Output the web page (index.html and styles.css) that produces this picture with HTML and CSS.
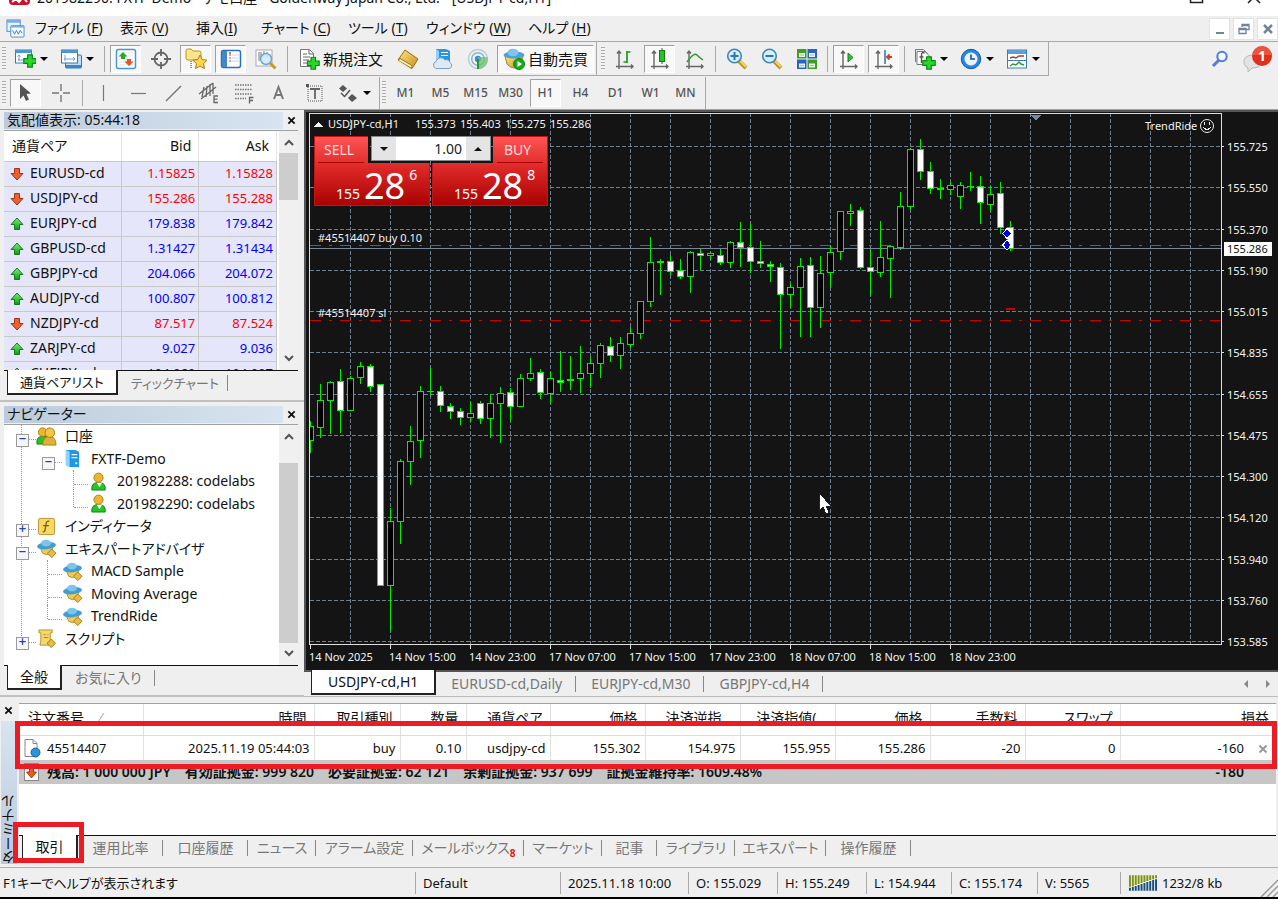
FILE: index.html
```html
<!DOCTYPE html>
<html lang="ja">
<head>
<meta charset="utf-8">
<title>USDJPY-cd,H1</title>
<link rel="stylesheet" href="styles.css">
</head>
<body>
<svg class="defs" aria-hidden="true">
  <defs>
    <linearGradient id="gBlue" x1="0" y1="0" x2="0" y2="1"><stop offset="0" stop-color="#8fd0f5"/><stop offset="1" stop-color="#1f78c8"/></linearGradient>
    <linearGradient id="gGold" x1="0" y1="0" x2="1" y2="1"><stop offset="0" stop-color="#ffe68a"/><stop offset="1" stop-color="#c8901c"/></linearGradient>
    <linearGradient id="gGreen" x1="0" y1="0" x2="0" y2="1"><stop offset="0" stop-color="#7cf07c"/><stop offset="1" stop-color="#0a9a12"/></linearGradient>
    <symbol id="plus" viewBox="0 0 12 12"><path d="M4 .7h4V4h3.3v4H8v3.3H4V8H.7V4H4z" fill="#2bd62b" stroke="#078a10"/></symbol>
    <symbol id="i-newchart" viewBox="0 0 22 22"><rect x="1.500" y="2" width="16" height="13" fill="#fff" stroke="#2f79b9"/><path d="M1.500 2h16v3h-16z" fill="#4c97d3"/><path d="M5 7v6M3.500 8.500 5 7l1.500 1.500M4 12h9" stroke="#6ba4d4" fill="none"/><use href="#plus" x="9" y="6" width="14" height="14"/></symbol>
    <symbol id="i-profiles" viewBox="0 0 22 22"><rect x="5.500" y="7" width="16" height="13" rx="1" fill="#c2ddf5" stroke="#2f79b9"/><path d="M6 17h15v3H6z" fill="#3d86c4"/><rect x="1.500" y="2" width="16" height="13" fill="#fff" stroke="#2f79b9"/><path d="M1.500 2h16v3h-16z" fill="#4c97d3"/><path d="M5 7v6M4 11h11M13 9l2 2-2 2" stroke="#6ba4d4" fill="none"/></symbol>
    <symbol id="i-watch" viewBox="0 0 22 22"><rect x="1.500" y="1.500" width="19" height="19" rx="2" fill="#fff" stroke="#4b96d1" stroke-width="1.500"/><path d="M4 5h14M4 8h14M4 11h14M4 14h14M4 17h14" stroke="#e2e2e2"/><path d="m8 4 4.500 4.500H10V11H6V8.500H3.500z" fill="#29a829"/><path d="m14 18 4.500-4.500H16V11h-4v2.500H9.500z" fill="#e6532a"/></symbol>
    <symbol id="i-cross" viewBox="0 0 22 22"><circle cx="11" cy="11" r="6.500" fill="none" stroke="#666" stroke-width="1.800"/><path d="M11 1v7M11 14v7M1 11h7M14 11h7" stroke="#666" stroke-width="1.800"/></symbol>
    <symbol id="i-nav" viewBox="0 0 22 22"><path d="M1 3q0-2 2-2h3l2 2h6q2 0 2 2v7H3q-2 0-2-2z" fill="#ffe58a" stroke="#bb9228"/><path d="M6 13v8" stroke="#333" stroke-dasharray="1 1"/><path d="m15 7 2.200 4.600 5 .6-3.700 3.400 1 5L15 18l-4.500 2.600 1-5-3.700-3.400 5-.6z" fill="#ffd84a" stroke="#a87d19"/></symbol>
    <symbol id="i-term" viewBox="0 0 22 22"><rect x="1.500" y="2.500" width="19" height="17" rx="2" fill="#fff" stroke="#2b6fb4" stroke-width="1.500"/><path d="M2 3h5v16H2z" fill="#4087cc"/><path d="M9 7h2M9 10h2M9 13h2" stroke="#e23b2e"/><path d="M9 5h2" stroke="#222"/><path d="M12 7h7M12 10h7M12 13h7" stroke="#c5d6e6"/></symbol>
    <symbol id="i-tester" viewBox="0 0 22 22"><rect x="1" y="2" width="16" height="16" fill="#fff" stroke="#aaa"/><path d="M4 4v9M6 4v6M9 3v6M12 4v5" stroke="#777"/><circle cx="11" cy="11" r="5.500" fill="#cfe8fa" fill-opacity=".85" stroke="#6ba7d6" stroke-width="1.500"/><path d="m15 15 5.500 5.500" stroke="#c99922" stroke-width="3"/></symbol>
    <symbol id="i-order" viewBox="0 0 22 22"><path d="M2.500 1.500h9l4 4v13h-13z" fill="#fff" stroke="#777"/><path d="M11 1.500V6h4.500M5 6h4M5 9h7M5 12h6M5 15h4" stroke="#666" fill="none"/><use href="#plus" x="8.500" y="8.500" width="13.500" height="13.500"/></symbol>
    <symbol id="i-book" viewBox="0 0 22 22"><path d="M1 12 8 2l13 9-6 9.500z" fill="url(#gGold)" stroke="#a06b10"/><path d="m1 12 13.500 9 1-3.500L2.500 9.500z" fill="#a8740f"/><path d="m2 12.500 12 7 .8-1.500L3 11z" fill="#fff3c4"/></symbol>
    <symbol id="i-cloud" viewBox="0 0 22 22"><path d="M4 1h10l4 2v11H4z" fill="#2b95e0"/><path d="m4 1 3 2v10H4z" fill="#8ed0fa"/><path d="M9 4.500h7M9 7.500h7" stroke="#fff"/><path d="M4 20.500a3.700 3.700 0 0 1 0-7 5 5 0 0 1 9-1.500 4 4 0 0 1 5 2.500 3.200 3.200 0 0 1-1 6z" fill="#dfe9f4" stroke="#7c9fc4"/></symbol>
    <symbol id="i-signal" viewBox="0 0 22 22"><circle cx="11" cy="11" r="9.500" fill="#eef4f8" stroke="#b8cbd9" stroke-width="1.500"/><circle cx="11" cy="11" r="6.300" fill="none" stroke="#8bb3cc" stroke-width="1.500"/><circle cx="11" cy="11" r="3.200" fill="#3b8fd0"/><path d="M11 9v12a10 10 0 0 0 9.500-12" fill="#6cc06c" fill-opacity=".75"/><path d="M11 11v10" stroke="#239a2b" stroke-width="2"/></symbol>
    <symbol id="i-auto" viewBox="0 0 22 22"><path d="M2 8h18l-2 8q-7 8-14 0z" fill="url(#gGold)" stroke="#ad8220"/><ellipse cx="11" cy="7" rx="10.500" ry="3.500" fill="#4aa3d8"/><ellipse cx="10" cy="4.500" rx="5.500" ry="3.800" fill="#7fc4ec"/><circle cx="16" cy="16" r="5.500" fill="#14ae1b" stroke="#0b7d12"/><path d="M14.500 13v6l4.500-3z" fill="#fff"/></symbol>
    <symbol id="axes" viewBox="0 0 22 22"><path d="M5 3v18M2 18.500h17M3 5.500 5 3l2 2.500M17 16.500l2 2-2 2" stroke="#666" stroke-width="1.400" fill="none"/></symbol>
    <symbol id="i-bar" viewBox="0 0 22 22"><use href="#axes" width="22" height="22"/><path d="M13 3v12M13 4h3.500M13 14H9.500" stroke="#1c9a1c" stroke-width="1.700" fill="none"/></symbol>
    <symbol id="i-candle" viewBox="0 0 22 22"><use href="#axes" width="22" height="22"/><path d="M13 0v16" stroke="#137d13"/><rect x="10.500" y="2.500" width="5" height="11" fill="#25c325" stroke="#137d13"/></symbol>
    <symbol id="i-line" viewBox="0 0 22 22"><use href="#axes" width="22" height="22"/><path d="M3 14q7-10 10-7t6 5" stroke="#2d9a2d" stroke-width="1.500" fill="none"/></symbol>
    <symbol id="lens" viewBox="0 0 22 22"><path d="m13 13 7 7" stroke="#c1921d" stroke-width="4"/><path d="m14 13 6 6" stroke="#f5d45e" stroke-width="2"/><circle cx="8.500" cy="8" r="6.800" fill="#d7effb" stroke="#3e86bf" stroke-width="1.600"/></symbol>
    <symbol id="i-zin" viewBox="0 0 22 22"><use href="#lens" width="22" height="22"/><path d="M4.500 8h8M8.500 4v8" stroke="#2874b4" stroke-width="2"/></symbol>
    <symbol id="i-zout" viewBox="0 0 22 22"><use href="#lens" width="22" height="22"/><path d="M4.500 8h8" stroke="#2874b4" stroke-width="2"/></symbol>
    <symbol id="i-tiles" viewBox="0 0 22 22"><path d="M1 1h9.500v9.500H1zM11.500 11.500H21V21h-9.500z" fill="#3f9e22"/><path d="M11.500 1H21v9.500h-9.500zM1 11.500h9.500V21H1z" fill="#2861c8"/><path d="M3 5h6v4H3zM13 5h6v4h-6zM3 15.500h6v4H3zM13 15.500h6v4h-6z" fill="#e9f3ee"/><path d="M4 7h4M14 7h4M4 17.500h4M14 17.500h4" stroke="#9cc0a8"/></symbol>
    <symbol id="i-scroll" viewBox="0 0 22 22"><use href="#axes" width="22" height="22"/><path d="M10 5v9l5-4.500z" fill="#2fbf3c" stroke="#16811f"/></symbol>
    <symbol id="i-shift" viewBox="0 0 22 22"><use href="#axes" width="22" height="22"/><path d="M12 2v14" stroke="#2877ad" stroke-width="1.500"/><path d="M19 9h-5m2.500-2.500L14 9l2.500 2.500" stroke="#c8421c" stroke-width="1.800" fill="none"/></symbol>
    <symbol id="i-ind" viewBox="0 0 22 22"><path d="M3 3.500h8l4 4v9H3z" fill="#fff" stroke="#777"/><path d="M1.500 14V1.500h8l4 4" fill="none" stroke="#777"/><path d="M10.500 5q-3-1.500-3 2v8M5.500 9h4" stroke="#555" stroke-width="1.400" fill="none"/><use href="#plus" x="8" y="8" width="14" height="14"/></symbol>
    <symbol id="i-clock" viewBox="0 0 22 22"><circle cx="11" cy="11" r="9.700" fill="#2688e4" stroke="#1055a8"/><circle cx="11" cy="11" r="6.500" fill="#e9f3fb"/><path d="M11 6.500V11h4" stroke="#1b4f8c" stroke-width="1.600" fill="none"/></symbol>
    <symbol id="i-tpl" viewBox="0 0 22 22"><rect x="1.500" y="2" width="19" height="18" fill="#fff" stroke="#3b7dbb"/><path d="M2 2h18v4H2z" fill="#5b9ed8"/><path d="M2 12.500h18" stroke="#3b7dbb"/><path d="m4 10 3-1 3 1 3-2h5" stroke="#b2392a" stroke-width="1.500" fill="none"/><path d="m4 18 3-2 3 1 3-3 2 2 3 1" stroke="#2c9a3c" stroke-width="1.500" fill="none"/></symbol>
    <symbol id="i-cursor" viewBox="0 0 22 22"><path d="M5 2v15l3.500-3.500L11 19l3-1.500-2.500-5.500 4.500-.5z" fill="#555"/></symbol>
    <symbol id="i-cross2" viewBox="0 0 22 22"><path d="M11 2v7M11 13v7M2 11h7M13 11h7" stroke="#777" stroke-width="1.400"/></symbol>
    <symbol id="i-vl" viewBox="0 0 22 22"><path d="M10.500 3v16" stroke="#777" stroke-width="1.200"/></symbol>
    <symbol id="i-hl" viewBox="0 0 22 22"><path d="M3 11.500h15" stroke="#777" stroke-width="1.200"/></symbol>
    <symbol id="i-tl" viewBox="0 0 22 22"><path d="M3 19 18 4" stroke="#777" stroke-width="1.400"/></symbol>
    <symbol id="i-ch" viewBox="0 0 22 22"><path d="M1 12 15 1M3 17 18 5M6 5 4 15M9 4 8 15M12 2v12M15 1v11" stroke="#666" stroke-width="1.300"/><path d="M20 14h-4v6.500h4M16 17.200h3.500" stroke="#666" stroke-width="1.300" fill="none"/></symbol>
    <symbol id="i-fib" viewBox="0 0 22 22"><path d="M2 3h17M2 7.500h17M2 12h17M2 16.500h11" stroke="#777" stroke-width="1.300" stroke-dasharray="1.500 1"/><path d="M20.500 15.500h-4v6M16.500 18.500h3.500" stroke="#666" stroke-width="1.300" fill="none"/></symbol>
    <symbol id="i-tx" viewBox="0 0 22 22"><path d="M6 17 10.500 5 15 17M7.500 13h6" stroke="#777" stroke-width="2" fill="none"/></symbol>
    <symbol id="i-lbl" viewBox="0 0 22 22"><rect x="5" y="4" width="14" height="15" fill="none" stroke="#555" stroke-dasharray="1 1"/><path d="M7 7h10M12 7v10" stroke="#666" stroke-width="1.800"/><path d="M3 2h3v3H3z" fill="#555"/></symbol>
    <symbol id="i-arr" viewBox="0 0 22 22"><path d="m6 3 4 3.500-4 3.500-4-3.500zM15 12l5 4-5 4-4-4z" fill="#555"/><path d="m8 14 5-6M4 11l4 4" stroke="#555" stroke-width="1.500"/></symbol>
    <symbol id="i-up" viewBox="0 0 14 14"><path d="M7 1 13 7.500H9.500v5h-5v-5H1z" fill="url(#gGreen)" stroke="#187818"/></symbol>
    <symbol id="i-down" viewBox="0 0 14 14"><path d="M7 13 1 6.500h3.500v-5h5v5H13z" fill="#ee6030" stroke="#a0340f"/></symbol>
    <symbol id="i-user" viewBox="0 0 20 20"><path d="M3 19q-1-8 7-8t7 8z" fill="#26c32b" stroke="#0c8413"/><path d="m8 11 3 5 3-5z" fill="#fff"/><circle cx="10" cy="6" r="4.800" fill="#efb62c" stroke="#a87b12"/></symbol>
    <symbol id="i-users" viewBox="0 0 22 20"><path d="M1 18q-1-8 5-8h5v8z" fill="#26c32b" stroke="#0c8413"/><circle cx="7" cy="5.500" r="4.500" fill="#efb62c" stroke="#a87b12"/><path d="M7 19q0-9 7-9t7 9z" fill="#dfb03a" stroke="#a87b12"/><circle cx="14.500" cy="6" r="5" fill="#f3c64a" stroke="#a87b12"/></symbol>
    <symbol id="i-server" viewBox="0 0 20 20"><path d="M3 1h10l4 2v16H7l-4-2z" fill="#1f97e6"/><path d="m3 1 4 2v16l-4-2z" fill="#90d4fb"/><path d="M9 6h6M9 9h6" stroke="#fff" stroke-width="1.300"/><path d="M13 15h2" stroke="#fff" stroke-width="2"/></symbol>
    <symbol id="i-func" viewBox="0 0 20 20"><rect x="1.500" y="1.500" width="17" height="17" rx="2" fill="#f7d865" stroke="#b8912c"/><path d="M13 4.500q-3-1-3.500 3l-1 6q-.5 2.500-2.500 2M6.500 9h6" stroke="#7b5d10" stroke-width="1.400" fill="none"/></symbol>
    <symbol id="i-ea" viewBox="0 0 22 20"><path d="M4 8h14l-3 7q-4 3-8 0z" fill="#f0cb55" stroke="#b38b24"/><ellipse cx="11" cy="7" rx="10" ry="3.800" fill="#3f9ed4" transform="rotate(-6 11 7)"/><ellipse cx="10.500" cy="4.300" rx="5.200" ry="3.600" fill="#7cc4ea"/><path d="m16.500 10.500 4.500 4.500-4.500 4.500-4.500-4.500z" fill="#e9bb45" stroke="#a17b1c"/></symbol>
    <symbol id="i-script" viewBox="0 0 22 20"><path d="M3 1h14v3h-2v9l2 4H4l1-4V4H3z" fill="#f6d76c" stroke="#b8912c"/><path d="M8 6h2M12 6h1M8 9h5" stroke="#a57f1e"/><path d="m16 10.500 4.500 4.500-4.500 4.500-4.500-4.500z" fill="#e9bb45" stroke="#a17b1c"/></symbol>
    <symbol id="i-close" viewBox="0 0 10 10"><path d="m1.500 1.500 7 7m0-7-7 7" stroke="currentColor" stroke-width="2"/></symbol>
    <symbol id="i-chev" viewBox="0 0 12 12"><path d="m2 8 4-4 4 4" stroke="#555" stroke-width="2" fill="none"/></symbol>
  </defs>
</svg>

<header class="titlebar">
  <svg class="logo" viewBox="0 0 21 20"><rect width="21" height="20" rx="4" fill="#d0102a"/><path d="m3 17 4-3 3 3 4-5 4 5" stroke="#fff" stroke-width="2" fill="none"/></svg>
  <span class="title">201982290: FXTF-Demo - デモ口座 - Goldenway Japan Co., Ltd. - [USDJPY-cd,H1]</span>
  <svg class="wincontrols" viewBox="0 0 76 12"><path d="M4.500 0v6.500h12V0" fill="none" stroke="#222" stroke-width="1.500"/><path d="m62 7 6-6 6 6" fill="none" stroke="#222" stroke-width="1.500"/></svg>
</header>

<nav class="menubar">
  <svg class="appicon" viewBox="0 0 20 20"><rect x="1" y="1" width="14" height="12" fill="#e8f2fb" stroke="#4e8fce"/><path d="M1 1h14v3H1z" fill="#78b0e2"/><rect x="5" y="7" width="14" height="12" rx="1" fill="#f4f9fd" stroke="#4e8fce"/><path d="M5 7h14v2H5z" fill="#78b0e2"/><path d="m7 12 2 4 2-4 2 4 2-4 2 3" stroke="#3f7fc0" fill="none"/></svg>
  <div class="menus"><button>ファイル (<u>F</u>)</button><button>表示 (<u>V</u>)</button><button>挿入(<u>I</u>)</button><button>チャート (<u>C</u>)</button><button>ツール (<u>T</u>)</button><button>ウィンドウ (<u>W</u>)</button><button>ヘルプ (<u>H</u>)</button></div>
  <div class="mdi">
    <button aria-label="最小化"><svg viewBox="0 0 12 12"><path d="M2 10h8" stroke="#70859a" stroke-width="2"/></svg></button>
    <button aria-label="元に戻す"><svg viewBox="0 0 12 12"><path d="M4 4V1.500h7v5H8.500M1 5.500h7v5H1zM1 6.500h7M4 2.500h7" stroke="#70859a" stroke-width="1.300" fill="none"/></svg></button>
    <button aria-label="閉じる"><svg viewBox="0 0 12 12"><path d="m2 2 8 8m0-8-8 8" stroke="#70859a" stroke-width="2.500"/></svg></button>
  </div>
</nav>

<div class="toolrow">
  <div class="toolbar">
    <i class="grip"></i>
    <button class="tb drop" aria-label="新規チャート"><svg><use href="#i-newchart"/></svg></button>
    <button class="tb drop" aria-label="プロファイル"><svg><use href="#i-profiles"/></svg></button>
    <i class="sep"></i>
    <button class="tb on" aria-label="気配値"><svg><use href="#i-watch"/></svg></button>
    <button class="tb" aria-label="データ"><svg><use href="#i-cross"/></svg></button>
    <button class="tb on" aria-label="ナビ"><svg><use href="#i-nav"/></svg></button>
    <button class="tb on" aria-label="端末"><svg><use href="#i-term"/></svg></button>
    <button class="tb" aria-label="テスター"><svg><use href="#i-tester"/></svg></button>
    <i class="sep"></i>
    <button class="tb text order"><svg><use href="#i-order"/></svg>新規注文</button>
    <button class="tb" aria-label="エディタ"><svg><use href="#i-book"/></svg></button>
    <button class="tb" aria-label="クラウド"><svg><use href="#i-cloud"/></svg></button>
    <button class="tb" aria-label="シグナル"><svg><use href="#i-signal"/></svg></button>
    <button class="tb text on auto"><svg><use href="#i-auto"/></svg>自動売買</button>
  </div>
  <div class="toolbar charttools">
    <i class="grip"></i>
    <button class="tb" aria-label="バー"><svg><use href="#i-bar"/></svg></button>
    <button class="tb on" aria-label="ローソク足"><svg><use href="#i-candle"/></svg></button>
    <button class="tb" aria-label="ライン"><svg><use href="#i-line"/></svg></button>
    <i class="sep"></i>
    <button class="tb" aria-label="拡大"><svg><use href="#i-zin"/></svg></button>
    <button class="tb" aria-label="縮小"><svg><use href="#i-zout"/></svg></button>
    <button class="tb" aria-label="整列"><svg><use href="#i-tiles"/></svg></button>
    <i class="sep"></i>
    <button class="tb on" aria-label="自動スクロール"><svg><use href="#i-scroll"/></svg></button>
    <button class="tb on" aria-label="シフト"><svg><use href="#i-shift"/></svg></button>
    <i class="sep"></i>
    <button class="tb drop" aria-label="指標"><svg><use href="#i-ind"/></svg></button>
    <button class="tb drop" aria-label="時間足"><svg><use href="#i-clock"/></svg></button>
    <button class="tb drop" aria-label="定型"><svg><use href="#i-tpl"/></svg></button>
  </div>
  <div class="quick">
    <button aria-label="検索"><svg viewBox="0 0 18 18"><path d="m2 16 6-6" stroke="#4c7fd6" stroke-width="3"/><circle cx="11" cy="6.500" r="4.700" fill="#f4f8ff" stroke="#4c7fd6" stroke-width="2"/></svg></button>
    <button aria-label="通知" class="bell"><svg viewBox="0 0 30 28"><path d="M9 10q-9 1-8 8 1 4 4 5v4l4-4q9 0 10-6z" fill="#e3e3e6" stroke="#b9b9bd"/><circle cx="19" cy="11" r="10" fill="#e0301e"/><path d="M9.500 10a9.500 9 0 0 1 19 0z" fill="#f06a50" fill-opacity=".6"/></svg><b>1</b></button>
  </div>
</div>
<div class="toolrow second">
  <div class="toolbar">
    <i class="grip"></i>
    <button class="tb on" aria-label="カーソル"><svg><use href="#i-cursor"/></svg></button>
    <button class="tb" aria-label="十字"><svg><use href="#i-cross2"/></svg></button>
    <i class="sep"></i>
    <button class="tb" aria-label="垂直線"><svg><use href="#i-vl"/></svg></button>
    <button class="tb" aria-label="水平線"><svg><use href="#i-hl"/></svg></button>
    <button class="tb" aria-label="傾向線"><svg><use href="#i-tl"/></svg></button>
    <button class="tb" aria-label="チャネル"><svg><use href="#i-ch"/></svg></button>
    <button class="tb" aria-label="フィボナッチ"><svg><use href="#i-fib"/></svg></button>
    <button class="tb" aria-label="文字"><svg><use href="#i-tx"/></svg></button>
    <button class="tb" aria-label="ラベル"><svg><use href="#i-lbl"/></svg></button>
    <button class="tb drop" aria-label="矢印"><svg><use href="#i-arr"/></svg></button>
  </div>
  <div class="toolbar frames">
    <i class="grip"></i>
    <button class="tb">M1</button><button class="tb">M5</button><button class="tb">M15</button><button class="tb">M30</button><button class="tb on">H1</button><button class="tb">H4</button><button class="tb">D1</button><button class="tb">W1</button><button class="tb">MN</button>
  </div>
</div>

<main class="workspace">
  <div class="side">
    <section class="panel">
      <h2><span>気配値表示: 05:44:18</span><button aria-label="閉じる"><svg><use href="#i-close"/></svg></button></h2>
      <div class="body market">
        <table>
          <thead><tr><th>通貨ペア</th><th>Bid</th><th>Ask</th></tr></thead>
          <tbody>
            <tr class="down"><td><svg><use href="#i-down"/></svg>EURUSD-cd</td><td>1.15825</td><td>1.15828</td></tr>
            <tr class="down"><td><svg><use href="#i-down"/></svg>USDJPY-cd</td><td>155.286</td><td>155.288</td></tr>
            <tr><td><svg><use href="#i-up"/></svg>EURJPY-cd</td><td>179.838</td><td>179.842</td></tr>
            <tr><td><svg><use href="#i-up"/></svg>GBPUSD-cd</td><td>1.31427</td><td>1.31434</td></tr>
            <tr><td><svg><use href="#i-up"/></svg>GBPJPY-cd</td><td>204.066</td><td>204.072</td></tr>
            <tr><td><svg><use href="#i-up"/></svg>AUDJPY-cd</td><td>100.807</td><td>100.812</td></tr>
            <tr class="down"><td><svg><use href="#i-down"/></svg>NZDJPY-cd</td><td>87.517</td><td>87.524</td></tr>
            <tr><td><svg><use href="#i-up"/></svg>ZARJPY-cd</td><td>9.027</td><td>9.036</td></tr>
            <tr><td><svg><use href="#i-up"/></svg>CHFJPY-cd</td><td>194.969</td><td>194.997</td></tr>
          </tbody>
        </table>
        <div class="scroll"><svg><use href="#i-chev"/></svg><i class="thumb short"></i><svg class="flip"><use href="#i-chev"/></svg></div>
      </div>
      <div class="tabs markettabs"><button class="active">通貨ペアリスト</button><button>ティックチャート</button></div>
    </section>
    <section class="panel nav">
      <h2><span>ナビゲーター</span><button aria-label="閉じる"><svg><use href="#i-close"/></svg></button></h2>
      <div class="body">
        <ul class="tree">
          <li class="l1 minus"><svg><use href="#i-users"/></svg>口座</li>
          <li class="l2 minus"><svg><use href="#i-server"/></svg>FXTF-Demo</li>
          <li class="l3"><svg><use href="#i-user"/></svg>201982288: codelabs</li>
          <li class="l3 last"><svg><use href="#i-user"/></svg>201982290: codelabs</li>
          <li class="l1 plus"><svg><use href="#i-func"/></svg>インディケータ</li>
          <li class="l1 minus"><svg><use href="#i-ea"/></svg>エキスパートアドバイザ</li>
          <li class="l2"><svg><use href="#i-ea"/></svg>MACD Sample</li>
          <li class="l2"><svg><use href="#i-ea"/></svg>Moving Average</li>
          <li class="l2 last"><svg><use href="#i-ea"/></svg>TrendRide</li>
          <li class="l1 plus last"><svg><use href="#i-script"/></svg>スクリプト</li>
        </ul>
        <div class="scroll"><svg><use href="#i-chev"/></svg><i class="thumb long"></i><svg class="flip"><use href="#i-chev"/></svg></div>
      </div>
      <div class="tabs"><button class="active">全般</button><button>お気に入り</button></div>
    </section>
  </div>
  <div class="chartcol">
    <div class="chart">
      <svg id="chart" viewBox="304 110 974 560" preserveAspectRatio="xMinYMin meet">
        <g id="grid"></g>
        <path d="M310 245.500H1221" stroke="#228b22" stroke-dasharray="11 8 3 8" class="level"/>
        <path d="M310 320.500H1221" stroke="#c80000" stroke-dasharray="11 8 3 8" class="level"/>
        <path d="M310 248.500H1221" stroke="#778899"/>
        <g id="candles"></g>
        <path d="M1006 309h9" stroke="#c80000" stroke-width="2"/>
        <g fill="#0000f0" stroke="#fff"><path d="m1007 228.500 4.500 5-4.500 5-4.500-5zM1007 240l4.500 5-4.500 5-4.500-5z"/></g>
        <path d="M309.500 644.500V113.500H1221V644.500z" fill="none" stroke="#ddd" stroke-width="1"/>
        <path d="M1030 114.500h12l-6 6z" fill="#778899"/>
        <g id="labels" class="lbl">
          <path d="M314 127h9l-4.500-5z"/>
          <text x="328" y="128">USDJPY-cd,H1</text><text x="415" y="128">155.373</text><text x="460" y="128">155.403</text><text x="505" y="128">155.275</text><text x="550" y="128">155.286</text>
          <text x="318" y="242">#45514407 buy 0.10</text>
          <text x="318" y="317">#45514407 sl</text>
          <text x="1145" y="130">TrendRide</text>
        </g>
        <g fill="none" stroke="#eee"><circle cx="1207" cy="126" r="6.500"/><path d="M1203 127q4 5 8 0M1204.500 122v2.500M1209.500 122v2.500" stroke-width="1.300"/></g>
        <rect x="1224" y="242" width="48" height="14" fill="#fff"/><text x="1227" y="253" class="price">155.286</text>
        <path d="M819 493v18l4-4 3 7 3-1.500-3-6.500h5.500z" fill="#fff" stroke="#222"/>
      </svg>
      <div class="oneclick">
        <button class="sell"><span class="side-name">SELL</span><span class="quote"><small>155</small><b>28</b><sup>6</sup></span></button>
        <button class="buy"><span class="side-name">BUY</span><span class="quote"><small>155</small><b>28</b><sup>8</sup></span></button>
        <div class="lots"><button aria-label="減らす"><i class="tri dn"></i></button><input type="text" value="1.00" aria-label="数量"><button aria-label="増やす"><i class="tri"></i></button></div>
      </div>
    </div>
    <div class="tabs charttabs"><button class="active">USDJPY-cd,H1</button><button>EURUSD-cd,Daily</button><button>EURJPY-cd,M30</button><button>GBPJPY-cd,H4</button><span class="arrows"><i></i><i class="r"></i></span></div>
  </div>
</main>

<section class="terminal">
  <div class="vside"><button aria-label="閉じる"><svg><use href="#i-close"/></svg></button><h2>ターミナル</h2></div>
  <div class="tmain">
    <div class="tbody">
      <table>
        <colgroup><col class="c124"><col class="c171"><col class="c86"><col class="c66"><col class="c84"><col class="c95"><col class="c95"><col class="c95"><col class="c95"><col class="c95"><col class="c95"><col></colgroup>
        <thead><tr><th>注文番号 <span class="slash">⁄</span></th><th>時間</th><th>取引種別</th><th>数量</th><th>通貨ペア</th><th>価格</th><th>決済逆指…</th><th>決済指値(…</th><th>価格</th><th>手数料</th><th>スワップ</th><th>損益</th></tr></thead>
        <tbody>
          <tr><td><svg class="doc" viewBox="0 0 18 20"><path d="M2 1.500h8l4 4v13H2z" fill="#fff" stroke="#888"/><path d="M10 1.500v4h4" fill="none" stroke="#888"/><circle cx="12.500" cy="14.500" r="4.500" fill="#2b94dd" stroke="#14639f"/></svg>45514407</td><td>2025.11.19 05:44:03</td><td>buy</td><td>0.10</td><td>usdjpy-cd</td><td>155.302</td><td>154.975</td><td>155.955</td><td>155.286</td><td>-20</td><td>0</td><td>-160<button aria-label="決済"><svg><use href="#i-close"/></svg></button></td></tr>
          <tr class="sum"><td colspan="11"><svg class="doc" viewBox="0 0 18 20"><rect x="1.500" y="1.500" width="14" height="17" fill="#fff" stroke="#888"/><path d="m8.500 16-5-6h3V5h4v5h3z" fill="#e85a22" stroke="#a8380e"/></svg>残高: 1 000 000 JPY&emsp;有効証拠金: 999 820&emsp;必要証拠金: 62 121&emsp;余剰証拠金: 937 699&emsp;証拠金維持率: 1609.48%</td><td>-180</td></tr>
        </tbody>
      </table>
    </div>
    <div class="tabs"><button class="active">取引</button><button>運用比率</button><button>口座履歴</button><button>ニュース</button><button>アラーム設定</button><button>メールボックス<sub>8</sub></button><button>マーケット</button><button>記事</button><button>ライブラリ</button><button>エキスパート</button><button>操作履歴</button></div>
  </div>
  <div class="mark row"></div>
  <div class="mark tab"></div>
</section>

<footer class="status">
  <span>F1キーでヘルプが表示されます</span><span>Default</span><span>2025.11.18 10:00</span><span>O: 155.029</span><span>H: 155.249</span><span>L: 154.944</span><span>C: 155.174</span><span>V: 5565</span>
  <span><svg class="bars" viewBox="0 0 30 18"><path d="M2 1v12M5 1v11M8 1v10M11 1v9M14 1v8M17 1v7M20 1v6M23 1v5M26 1v4M29 1v3" stroke="#7c9410" stroke-width="2"/><path d="M2 17v-3M5 17v-4M8 17v-5M11 17v-6M14 17V10M17 17V9M20 17V8M23 17V7M26 17V6M29 17V5" stroke="#174f7c" stroke-width="2"/></svg>1232/8 kb</span>
  <svg class="resize" viewBox="0 0 18 18"><path d="M1 18 18 1M7 18 18 7M13 18l5-5" stroke="#999" stroke-width="1.500"/></svg>
</footer>
<script src="chart.js"></script>
</body>
</html>
```

FILE: styles.css
```css
* { box-sizing: border-box; }
body {
  margin: 0; min-height: 100vh; display: flex; flex-direction: column;
  background: #efefef; color: #111; overflow-x: hidden;
  font: 14px/20px "Noto Sans", "Noto Sans CJK JP", sans-serif;
  font-feature-settings: "palt";
}
button, input { font: inherit; font-feature-settings: inherit; color: inherit; border: 0; padding: 0; margin: 0; background: none; white-space: nowrap; }
svg { display: block; flex: none; }
h2 { margin: 0; font: inherit; }
.defs { position: absolute; width: 0; height: 0; }

.titlebar { height: 16px; background: #fff; display: flex; overflow: hidden; padding-left: 9px; gap: 7px; }
.titlebar .logo { width: 21px; height: 20px; margin-top: -15px; }
.titlebar .title { margin-top: -12px; white-space: nowrap; }
.wincontrols { width: 76px; height: 12px; margin: -4px 16px 0 auto; }

.menubar { height: 26px; display: flex; align-items: center; gap: 10px; padding-left: 6px; border-bottom: 1px solid #a8a8a8; }
.menubar .appicon { width: 19px; height: 19px; }
.menus { display: grid; grid-template-columns: 85px 76px 65px 87px 78px 102px 70px; line-height: 18px; padding-bottom: 1px; }
.menus button { text-align: left; }
.menubar u { text-underline-offset: 2px; }
.mdi { margin-left: auto; display: flex; gap: 3px; }
.mdi button { width: 21px; height: 22px; background: #fff; border: 1px solid #e2e2e2; display: grid; place-items: center; }
.mdi svg { width: 12px; height: 12px; }

.toolrow { display: flex; height: 34px; background: #efefef; }
.toolrow.second { border-bottom: 1px solid #a0a0a0; padding-top: 1px; }
.toolbar { display: flex; align-items: center; padding: 0 2px; border: solid #aaa; border-width: 0 1px 1px 0; }
.second .toolbar { border-bottom: 0; }
.grip { width: 4px; height: 24px; margin-right: 2px; background: repeating-linear-gradient(#aaa 0 1px, #f4f4f4 1px 3px); }
.sep { width: 1px; height: 26px; margin: 0 3px 0 4px; background: #a8a8a8; }
.charttools { padding-left: 4px; }
.charttools .sep { margin: 0 3px; }
.tb { width: 31px; height: 28px; margin: 0 2px; display: flex; align-items: center; justify-content: center; border: 1px solid transparent; }
.tb svg { width: 22px; height: 22px; }
.tb.on { background: #f8f8f8; border-color: #a0a0a0 #fff #fff #a0a0a0; }
.tb.drop { width: 42px; justify-content: space-between; padding: 0 3px; }
.drop::after { content: ""; border: 4px solid transparent; border-top-color: #000; border-bottom: 0; }
.tb.text { font-size: 15px; gap: 3px; }
.tb.order { width: 95px; }
.tb.auto { width: 97px; margin-right: 0; }
.frames .tb { font-size: 12px; font-weight: 500; color: #555; }
.quick { margin: 0 5px 0 auto; display: flex; align-items: center; gap: 14px; }
.quick button:first-child svg { width: 18px; height: 18px; }
.bell { position: relative; }
.bell svg { width: 30px; height: 28px; }
.bell b { position: absolute; left: 15px; top: 1px; color: #fff; }

.workspace { display: grid; grid-template-columns: 304px minmax(0, 1fr); }
.side { display: flex; flex-direction: column; }
.panel { padding: 2px 4px; border-bottom: 2px solid #c0c0c0; }
.panel.nav { padding-top: 4px; }
.panel h2 { height: 17px; line-height: 16px; display: flex; margin-bottom: 1px; }
.panel h2 span { flex: 1; background: linear-gradient(90deg, #bccbdc, #d8e4f0); padding-left: 3px; }
.panel h2 button { width: 17px; display: grid; place-items: center; }
.panel h2 svg, .vside svg { width: 9px; height: 9px; }
.body { display: flex; background: #fff; border-bottom: 1px solid #111; border-top: 1px solid #a0a0a0; margin-right: 2px; overflow: hidden; height: 242px; }
.body.market { height: 241px; }
.market table { width: 273px; border-collapse: collapse; table-layout: fixed; }
.market th, .market td { height: 25px; padding: 0 3px; text-align: right; font-weight: 400; border: solid #c9c9c9; border-width: 0 1px 1px 0; line-height: 20px; }
.market th { height: 30px; padding-right: 7px; border-right-color: #e5e5e5; }
.market th:first-child { width: 117px; text-align: left; padding-left: 8px; }
.market td { background: #e6e6fa; color: #00f; font-size: 13px; padding-bottom: 1px; }
.market td:first-child { text-align: left; color: #111; font-size: 14px; padding-left: 6px; }
.market .down td:not(:first-child) { color: #f00; }
.market td svg { float: left; width: 14px; height: 14px; margin: 4px 6px 0 0; }
.scroll { width: 19px; margin-left: auto; background: #f0f0f0; display: flex; flex-direction: column; align-items: center; padding: 6px 0; gap: 4px; }
.scroll svg { width: 12px; height: 12px; }
.scroll .flip { transform: scaleY(-1); margin-top: auto; }
.thumb { width: 19px; background: #cdcdcd; }
.thumb.short { height: 47px; }
.thumb.long { height: 181px; margin-top: 16px; }

.tabs { display: flex; align-items: flex-start; height: 27px; padding-left: 3px; }
.tabs button { height: 24px; padding: 0 13px; color: #777; position: relative; }
.tabs button:not(.active)::after { content: ""; position: absolute; right: 0; top: 4px; height: 16px; border-right: 1px solid #888; }
.tabs .active { height: 25px; margin-top: -1px; padding: 0 12px; background: #fff; color: #111; border: solid #222; border-width: 0 2px 2px 1px; }
.markettabs { font-size: 13px; }
.markettabs button:not(.active) { padding-right: 9px; }

.tree { flex: 1; margin: 0; padding: 0; list-style: none; height: 225px; display: flex; flex-direction: column; position: relative; }
.tree::before { content: ""; position: absolute; left: 17px; top: 0; height: 215px; border-left: 1px dotted #999; }
.tree li { flex: 1; display: flex; align-items: center; gap: 8px; position: relative; }
.tree svg { width: 21px; height: 19px; }
.tree .l1 { padding-left: 32px; }
.tree .l2 { padding-left: 58px; }
.tree .l3 { padding-left: 84px; }
.tree li::before { content: ""; position: absolute; top: 14px; height: 1px; width: 14px; border-top: 1px dotted #999; }
.tree .l1::before { left: 18px; }
.tree .l2::before { left: 44px; }
.tree .l3::before { left: 70px; }
.tree .l2::after, .tree .l3::after { content: ""; position: absolute; left: 43px; top: 0; height: 24px; border-left: 1px dotted #999; }
.tree .l3::after { left: 69px; }
.tree .last::after { height: 14px; }
.tree .minus::after, .tree .plus::after { content: "−"; position: absolute; left: 12px; top: 9px; width: 11px; height: 11px; border: 1px solid #9a9a9a; background: #f4f6fa; color: #2442b4; font: 700 10px/8px "DejaVu Sans", sans-serif; text-align: center; z-index: 1; }
.tree .plus::after { content: "+"; }
.tree .l2.minus::after { left: 38px; }

.chartcol { display: flex; flex-direction: column; min-width: 0; }
.chart { position: relative; flex: 1; background: #141414; }
#chart { width: 100%; height: 560px; box-shadow: inset 2px 2px 0 #555; }
#chart path, #chart rect { shape-rendering: crispEdges; }
.level { stroke-width: 1px; }
.lbl { fill: #f2f2f2; font-size: 11px; }
.price { fill: #111; font-size: 11px; }
.oneclick { position: absolute; left: 10px; top: 26px; display: flex; gap: 2px; color: #fff; }
.sell, .buy { width: 116px; height: 70px; position: relative; background: linear-gradient(#ff5656, #de2828 45%, #a80000); box-shadow: inset 0 0 0 1px #c41414; clip-path: polygon(0 0, 54px 0, 54px 27px, 100% 27px, 100% 100%, 0 100%); text-align: left; }
.buy { clip-path: polygon(0 27px, 61px 27px, 61px 0, 100% 0, 100% 100%, 0 100%); }
.side-name { display: block; height: 27px; line-height: 27px; width: 46px; margin-left: 4px; padding-left: 6px; border-bottom: 1px solid #a00; color: #ffdcdc; }
.buy .side-name { margin-left: 65px; padding-left: 7px; }
.quote { display: flex; align-items: flex-end; height: 43px; padding-left: 22px; gap: 4px; }
.quote small { font-size: 14px; line-height: 25px; }
.quote b { font-weight: 400; font-size: 36px; line-height: 41px; }
.quote sup { font-size: 14px; line-height: 24px; align-self: flex-start; }
.lots { position: absolute; left: 57px; top: 0; width: 120px; height: 25px; display: flex; border: 1px solid #888; background: #fff; color: #222; }
.lots button { width: 24px; background: #e4e4e4; display: grid; place-items: center; }
.lots input { flex: 1; min-width: 0; text-align: right; padding-right: 4px; }
.tri { border: 4px solid transparent; border-bottom-color: #111; border-top: 0; }
.tri.dn { border: 4px solid transparent; border-top-color: #111; border-bottom: 0; }
.charttabs { border-top: 2px solid #555; padding-left: 7px; border-bottom: 1px solid #bbb; }
.charttabs button { padding: 0 14px 0 15px; }
.charttabs .active { padding: 0 16px; margin-top: -2px; }
.arrows { margin: 8px 8px 0 auto; display: flex; gap: 18px; }
.arrows i { border: 4px solid transparent; border-right-color: #888; border-left: 0; }
.arrows .r { border: 4px solid transparent; border-left-color: #888; border-right: 0; }

.terminal { flex: 1; display: flex; position: relative; padding-top: 6px; border-bottom: 1px solid #b0b0b0; }
.vside { width: 19px; display: flex; flex-direction: column; align-items: center; padding: 3px 2px 3px 0; }
.vside h2 { flex: 1; width: 16px; margin-top: 6px; background: linear-gradient(#b8c9dc, #d8e4f0); writing-mode: vertical-rl; line-height: 16px; transform: rotate(180deg); }
.tmain { flex: 1; min-width: 0; display: flex; flex-direction: column; margin-right: 2px; }
.tbody { flex: 1; background: #fff; border-top: 1px solid #a0a0a0; border-bottom: 1px solid #111; }
.terminal table { width: 100%; table-layout: fixed; border-collapse: collapse; }
.terminal th, .terminal td { padding: 0 4px; height: 25px; line-height: 20px; text-align: right; font-weight: 400; white-space: nowrap; overflow: hidden; border-right: 1px solid #e0e0e0; }
.terminal th { height: 31px; padding: 0 7px 3px; border-bottom: 1px solid #ddd; }
.terminal th:last-child, .terminal td:last-child { border-right: 0; }
.terminal th:first-child { text-align: left; padding-left: 9px; }
.slash { color: #aaa; margin-left: 12px; }
.terminal td:first-child { text-align: left; }
.terminal tbody tr:first-child { font-size: 13px; }
.doc { float: left; width: 18px; height: 20px; margin-right: 6px; }
.terminal td button { color: #999; float: right; margin: 6px 4px 0 14px; }
.terminal td button svg { width: 10px; height: 10px; }
.terminal .sum td { background: #c6c6c6; border: 0; height: 24px; font-weight: 600; }
.terminal .sum td:last-child { padding-right: 32px; }
.c124 { width: 124px; } .c171 { width: 171px; } .c86 { width: 86px; } .c66 { width: 66px; } .c84 { width: 84px; } .c95 { width: 95px; }
.terminal .tabs { height: 31px; display: grid; grid-template-columns: 56px 85px 85px 68px 97px 111px 78px 55px 78px 91px 85px; }
.terminal .tabs button { padding: 0; }
.terminal .tabs sub { color: #e11; font-size: 10px; font-weight: 700; line-height: 0; }
.mark { position: absolute; border: 5px solid #ed1c24; pointer-events: none; }
.mark.row { left: 15px; right: 1px; top: 24px; height: 48px; }
.mark.tab { left: 13px; width: 71px; bottom: 4px; height: 41px; }

.status { height: 31px; display: grid; grid-template-columns: 1fr 145px 128px 89px 89px 85px 86px 83px 158px; align-items: center; position: relative; border-bottom: 2px solid #000; font-size: 13px; }
.status span { display: flex; align-items: center; height: 22px; padding-left: 7px; border-left: 1px solid #aaa; white-space: nowrap; }
.status span:first-child { border: 0; padding-left: 3px; }
.bars { width: 29px; height: 18px; margin-right: 5px; }
.resize { position: absolute; right: 0; bottom: 0; width: 18px; height: 18px; }
```

FILE: chart.js
```js
const NS = "http://www.w3.org/2000/svg";
const add = (parent, name, attrs, text) => {
  const el = document.createElementNS(NS, name);
  for (const k in attrs) el.setAttribute(k, attrs[k]);
  if (text) el.textContent = text;
  parent.appendChild(el);
};
const grid = document.getElementById("grid");
const labels = document.getElementById("labels");
const candles = document.getElementById("candles");
const top0 = 113, bottom = 644, left = 310, right = 1221;

const prices = ["155.725", "155.550", "155.370", "155.190", "155.015", "154.835", "154.655", "154.475", "154.300", "154.120", "153.940", "153.760", "153.585"];
const line = { stroke: "#6f8093", "stroke-dasharray": "4 2" };
prices.forEach((p, i) => {
  const y = Math.round(146 + i * 41.25) + 0.5;
  add(grid, "path", { d: `M${left} ${y}H${right}`, ...line });
  add(labels, "path", { d: `M${right} ${y}h3`, stroke: "#ddd" });
  add(labels, "text", { x: 1227, y: y + 4 }, p);
});
for (let x = 350.5; x < right; x += 40) add(grid, "path", { d: `M${x} ${top0}V${bottom}`, ...line });

const times = ["14 Nov 2025", "14 Nov 15:00", "14 Nov 23:00", "17 Nov 07:00", "17 Nov 15:00", "17 Nov 23:00", "18 Nov 07:00", "18 Nov 15:00", "18 Nov 23:00"];
times.forEach((t, i) => {
  add(labels, "path", { d: `M${310.5 + i * 80} 645v4`, stroke: "#ddd" });
  add(labels, "text", { x: 309 + i * 80, y: 661 }, t);
});

// high, body top, body bottom, low, falling
const data = [
  [421,426,441,453,0],[384,400,428,438,0],[381,382,401,434,0],[369,381,411,433,1],[376,378,411,411,0],[362,366,378,384,0],[364,366,387,392,1],[384,384,586,586,1],
  [508,521,586,631,0],[459,461,522,544,0],[426,441,462,485,0],[386,391,441,458,0],[367,391,392,396,0],[386,391,406,412,1],[403,406,412,419,1],[408,411,418,425,1],
  [402,413,418,422,0],[401,403,419,424,1],[394,403,419,438,0],[387,393,404,443,0],[388,392,407,421,1],[374,378,407,407,0],[358,373,379,381,0],[369,372,393,399,1],
  [372,378,394,403,0],[351,380,383,392,1],[356,379,381,390,0],[346,373,379,393,0],[357,363,374,388,0],[343,345,364,378,0],[337,346,356,362,1],[337,343,356,369,0],
  [327,333,345,348,0],[301,301,334,339,0],[237,262,302,307,0],[259,261,263,295,1],[255,261,272,275,1],[259,270,277,279,1],[251,252,277,293,0],[249,253,256,270,1],
  [252,253,256,259,0],[249,255,263,265,1],[241,242,263,268,0],[222,242,248,267,1],[223,247,262,273,1],[241,261,264,268,1],[261,264,267,282,1],[263,267,295,349,1],
  [283,287,295,308,0],[258,266,288,337,0],[257,265,308,337,1],[256,273,308,328,0],[245,252,273,287,0],[211,211,252,260,0],[204,211,214,226,0],[207,210,268,269,1],
  [249,267,272,296,1],[221,257,273,277,0],[245,246,259,298,0],[192,206,248,250,0],[148,149,207,210,0],[139,149,172,180,1],[162,171,189,194,1],[179,188,190,199,1],
  [182,185,190,195,0],[182,185,197,209,0],[172,186,187,191,0],[176,186,203,224,1],[186,194,205,211,0],[182,193,228,234,1],[221,227,249,251,1]
];
data.forEach(([hi, t, b, lo, falling], i) => {
  const x = 310 + i * 10;
  add(candles, "path", { d: `M${x + 0.5} ${hi}V${lo}`, stroke: "#00f000" });
  const bx = Math.max(x - 3, 310);
  const w = x + 4 - bx;
  add(candles, "rect", { x: bx, y: t, width: w, height: b - t, fill: "#00f000" });
  if (b - t > 2) add(candles, "rect", { x: i ? bx + 1 : bx, y: t + 1, width: i ? w - 2 : w - 1, height: b - t - 2, fill: falling ? "#fff" : "#000" });
});
```
